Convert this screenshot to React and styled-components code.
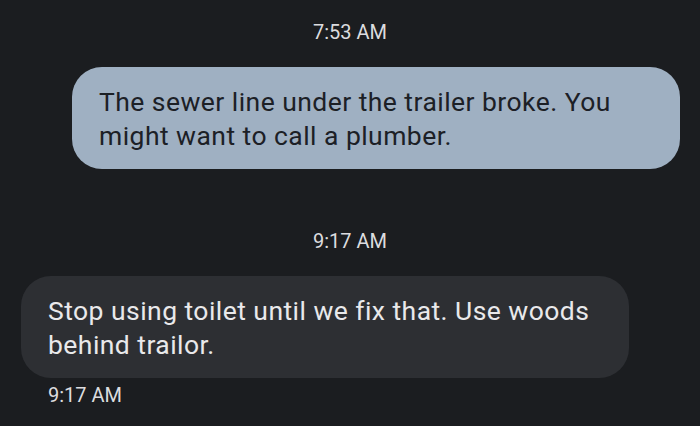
import styled, { createGlobalStyle } from 'styled-components';

const GlobalStyle = createGlobalStyle`
  html, body {
    margin: 0;
    padding: 0;
    background: #1b1d20;
  }
  body {
    font-family: Roboto, "Noto Sans", sans-serif;
  }
`;

const messages = [
  {
    id: 1,
    stamp: '7:53 AM',
    outgoing: true,
    text: 'The sewer line under the trailer broke. You might want to call a plumber.',
  },
  {
    id: 2,
    stamp: '9:17 AM',
    outgoing: false,
    text: 'Stop using toilet until we fix that. Use woods behind trailor.',
    footer: '9:17 AM',
  },
];

export default function App() {
  return (
    <>
      <GlobalStyle />
      <Thread>
        {messages.map((m) => (
          <Group key={m.id}>
            <Stamp>{m.stamp}</Stamp>
            <Bubble $outgoing={m.outgoing}>{m.text}</Bubble>
            {m.footer && <Footer>{m.footer}</Footer>}
          </Group>
        ))}
      </Thread>
    </>
  );
}

const Thread = styled.div`
  width: 700px;
  height: 426px;
  overflow: hidden;
  box-sizing: border-box;
  padding-top: 20px;
  display: flex;
  flex-direction: column;
  gap: 60px;
`;

const Group = styled.div`
  display: flex;
  flex-direction: column;
`;

const Stamp = styled.div`
  text-align: center;
  font-size: 20px;
  line-height: 24px;
  color: #dcdcdf;
  margin-bottom: 23px;
`;

const Bubble = styled.div`
  box-sizing: border-box;
  align-self: ${(p) => (p.$outgoing ? 'flex-end' : 'flex-start')};
  width: 608px;
  margin: ${(p) => (p.$outgoing ? '0 20px 0 0' : '0 0 0 21px')};
  padding: 18px 27px 16px;
  border-radius: 30px;
  background: ${(p) => (p.$outgoing ? '#9fb0c2' : '#2d2f33')};
  color: ${(p) => (p.$outgoing ? '#1c2026' : '#e9e9eb')};
  font-size: 26.5px;
  line-height: 34px;
  letter-spacing: 0.45px;
`;

const Footer = styled.div`
  margin: 5px 0 0 48px;
  font-size: 20px;
  line-height: 24px;
  color: #dcdcdf;
`;
